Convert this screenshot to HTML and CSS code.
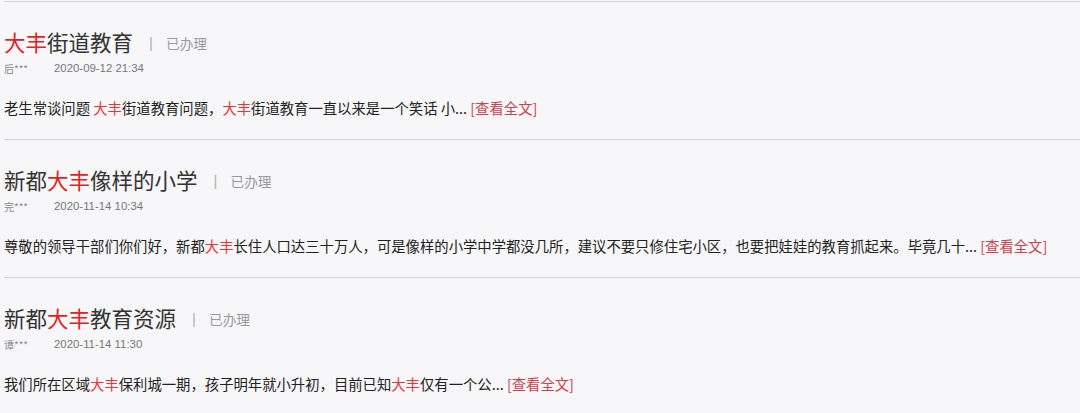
FILE: index.html
```html
<!DOCTYPE html>
<html lang="zh-CN">
<head>
    <meta charset="UTF-8">
    <title>留言列表</title>
    <link rel="stylesheet" href="styles.css">
</head>
<body>
    <div class="list">
        <div class="item">
            <div class="head">
                <span class="title"><em>大丰</em>街道教育</span>
                <span class="sep">|</span>
                <span class="status">已办理</span>
            </div>
            <div class="meta">
                <span class="user">后***</span>
                <span class="date">2020-09-12 21:34</span>
            </div>
            <p class="body">老生常谈问题 <em>大丰</em>街道教育问题，<em>大丰</em>街道教育一直以来是一个笑话 小... <a href="#">[查看全文]</a></p>
        </div>
        <div class="item">
            <div class="head">
                <span class="title">新都<em>大丰</em>像样的小学</span>
                <span class="sep">|</span>
                <span class="status">已办理</span>
            </div>
            <div class="meta">
                <span class="user">完***</span>
                <span class="date">2020-11-14 10:34</span>
            </div>
            <p class="body">尊敬的领导干部们你们好，新都<em>大丰</em>长住人口达三十万人，可是像样的小学中学都没几所，建议不要只修住宅小区，也要把娃娃的教育抓起来。毕竟几十... <a href="#">[查看全文]</a></p>
        </div>
        <div class="item">
            <div class="head">
                <span class="title">新都<em>大丰</em>教育资源</span>
                <span class="sep">|</span>
                <span class="status">已办理</span>
            </div>
            <div class="meta">
                <span class="user">谭***</span>
                <span class="date">2020-11-14 11:30</span>
            </div>
            <p class="body">我们所在区域<em>大丰</em>保利城一期，孩子明年就小升初，目前已知<em>大丰</em>仅有一个公... <a href="#">[查看全文]</a></p>
        </div>
    </div>
</body>
</html>
```

FILE: styles.css
```css
* {
    margin: 0;
    padding: 0;
    box-sizing: border-box;
}
body {
    background-color: #f7f6f9;
    font-family: "Noto Sans CJK SC", "Liberation Sans", sans-serif;
    color: #333;
    padding: 1px 0 0 4px;
}
em {
    font-style: normal;
}
.item {
    border-top: 1px solid #d6d6d8;
    padding: 25px 0 21px 0;
}
.head {
    display: flex;
    align-items: center;
    height: 30px;
}
.title {
    font-size: 21.5px;
    line-height: 30px;
    color: #333;
}
.title em {
    color: #e3211f;
}
.sep {
    font-family: "Liberation Sans", sans-serif;
    font-size: 15px;
    color: #b0b0b0;
    margin: 1px 13px 0 16px;
}
.status {
    font-size: 13.7px;
    color: #999;
    margin-top: 1px;
}
.meta {
    display: flex;
    align-items: center;
    height: 16px;
    margin-top: 3px;
}
.user {
    width: 50px;
    font-size: 10px;
    color: #888;
}
.date {
    font-family: "Liberation Sans", sans-serif;
    font-size: 11.4px;
    color: #777;
}
.body {
    margin-top: 22px;
    font-size: 14.35px;
    line-height: 20px;
    color: #222;
}
.body em {
    color: #e8353a;
}
.body a {
    color: #c9424e;
    text-decoration: none;
}
```
